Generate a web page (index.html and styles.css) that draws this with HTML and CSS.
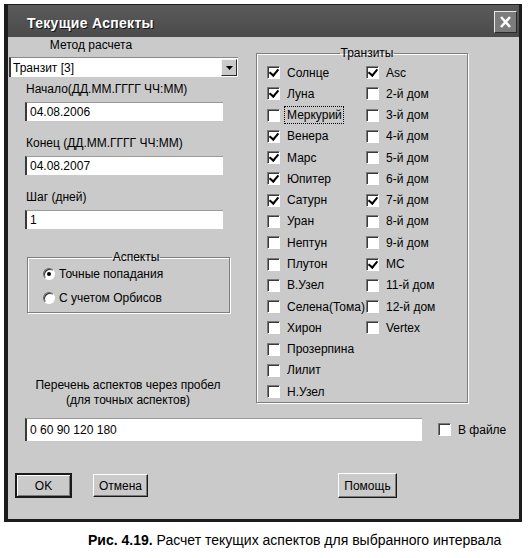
FILE: index.html
```html
<!DOCTYPE html>
<html lang="ru">
<head>
    <meta charset="UTF-8">
    <title>Текущие Аспекты</title>
    <link rel="stylesheet" href="styles.css">
</head>
<body>

<!-- Dialog window -->
<div class="dialog">
    <div class="titlebar">
        <span class="title">Текущие Аспекты</span>
        <button class="close-btn">
            <svg width="13" height="12" viewBox="0 0 13 12"><path d="M2 1 L11 11 M11 1 L2 11" stroke="#fff" stroke-width="2.6" fill="none"/></svg>
        </button>
    </div>

    <div class="dialog-body">
        <div class="main">
            <!-- Left side: method, dates, step, aspects -->
            <div class="left-col">
                <div class="method-label">Метод расчета</div>
                <div class="select">
                    <span class="select-text">Транзит [3]</span>
                    <span class="select-arrow"><svg width="7" height="4" viewBox="0 0 7 4"><path d="M0 0 H7 L3.5 4 Z" fill="#000"/></svg></span>
                </div>

                <div class="field-label">Начало(ДД.ММ.ГГГГ ЧЧ:ММ)</div>
                <input class="field" type="text" value="04.08.2006">

                <div class="field-label">Конец (ДД.ММ.ГГГГ ЧЧ:ММ)</div>
                <input class="field" type="text" value="04.08.2007">

                <div class="field-label">Шаг (дней)</div>
                <input class="field" type="text" value="1">

                <fieldset class="group aspects">
                    <legend>Аспекты</legend>
                    <label class="radio-row"><span class="radio checked"></span>Точные попадания</label>
                    <label class="radio-row"><span class="radio"></span>С учетом Орбисов</label>
                </fieldset>

                <div class="list-label">Перечень аспектов через пробел<br>(для точных аспектов)</div>
            </div>

            <!-- Right side: transit bodies and houses -->
            <fieldset class="group transits">
                <legend>Транзиты</legend>
                <div class="check-grid">
                    <label class="check-row"><span class="check on"></span>Солнце</label>
                    <label class="check-row"><span class="check on"></span>Луна</label>
                    <label class="check-row"><span class="check"></span><span class="focused">Меркурий</span></label>
                    <label class="check-row"><span class="check on"></span>Венера</label>
                    <label class="check-row"><span class="check on"></span>Марс</label>
                    <label class="check-row"><span class="check on"></span>Юпитер</label>
                    <label class="check-row"><span class="check on"></span>Сатурн</label>
                    <label class="check-row"><span class="check"></span>Уран</label>
                    <label class="check-row"><span class="check"></span>Нептун</label>
                    <label class="check-row"><span class="check"></span>Плутон</label>
                    <label class="check-row"><span class="check"></span>В.Узел</label>
                    <label class="check-row"><span class="check"></span>Селена(Тома)</label>
                    <label class="check-row"><span class="check"></span>Хирон</label>
                    <label class="check-row"><span class="check"></span>Прозерпина</label>
                    <label class="check-row"><span class="check"></span>Лилит</label>
                    <label class="check-row"><span class="check"></span>Н.Узел</label>

                    <label class="check-row"><span class="check on"></span>Asc</label>
                    <label class="check-row"><span class="check"></span>2-й дом</label>
                    <label class="check-row"><span class="check"></span>3-й дом</label>
                    <label class="check-row"><span class="check"></span>4-й дом</label>
                    <label class="check-row"><span class="check"></span>5-й дом</label>
                    <label class="check-row"><span class="check"></span>6-й дом</label>
                    <label class="check-row"><span class="check on"></span>7-й дом</label>
                    <label class="check-row"><span class="check"></span>8-й дом</label>
                    <label class="check-row"><span class="check"></span>9-й дом</label>
                    <label class="check-row"><span class="check on"></span>MC</label>
                    <label class="check-row"><span class="check"></span>11-й дом</label>
                    <label class="check-row"><span class="check"></span>12-й дом</label>
                    <label class="check-row"><span class="check"></span>Vertex</label>
                </div>
            </fieldset>
        </div>

        <div class="list-row">
            <input class="field wide" type="text" value="0 60 90 120 180">
            <label class="check-row"><span class="check"></span>В файле</label>
        </div>

        <div class="buttons">
            <button class="btn default">OK</button>
            <button class="btn cancel">Отмена</button>
            <button class="btn help">Помощь</button>
        </div>
    </div>
</div>

<p class="figure-caption"><b>Рис. 4.19.</b> Расчет текущих аспектов для выбранного интервала</p>

</body>
</html>
```

FILE: styles.css
```css
* {
    box-sizing: border-box;
}
body {
    margin: 0;
    background-color: #fff;
    font-family: "Liberation Sans", Arial, sans-serif;
}
.dialog {
    margin: 4px 0 0 4px;
    width: 518px;
    height: 518px;
    background-color: #cacaca;
    border: 3px solid #1c1c1c;
    border-left-width: 4px;
    border-top-width: 1px;
    font-size: 12px;
    color: #000;
}

/* Title bar */
.titlebar {
    height: 32px;
    background: linear-gradient(#5a5a5a, #4a4a4a);
    display: flex;
    align-items: flex-start;
    justify-content: space-between;
    padding: 0 2px 0 19px;
}
.title {
    margin-top: 10px;
    font-size: 14px;
    font-weight: bold;
    line-height: 16px;
    color: #fff;
    letter-spacing: 0.3px;
    text-shadow: 1px 1px 0 #111;
}
.close-btn {
    margin-top: 6px;
    width: 23px;
    height: 22px;
    padding: 0;
    background-color: #7c7c7c;
    border: 1px solid;
    border-color: #e8e8e8 #2a2a2a #2a2a2a #e8e8e8;
    display: flex;
    align-items: center;
    justify-content: center;
}

/* Main area */
.main {
    display: flex;
    height: 371px;
}
.left-col {
    width: 248px;
    display: flex;
    flex-direction: column;
    align-items: flex-start;
}
.method-label {
    width: 166px;
    margin-top: 1px;
    line-height: 14px;
    text-align: center;
}
.select {
    margin: 5px 0 0 1px;
    width: 229px;
    height: 20px;
    background-color: #fff;
    border-top: 1px solid #8a8a8a;
    border-left: 2px solid #3a3a3a;
    display: flex;
    align-items: center;
    justify-content: space-between;
    padding: 0 1px 0 2px;
}
.select-arrow {
    width: 16px;
    height: 17px;
    background-color: #cacaca;
    border: 1px solid;
    border-color: #f4f4f4 #2a2a2a #2a2a2a #f4f4f4;
    display: flex;
    align-items: center;
    justify-content: center;
}
.field-label {
    margin: 5px 0 0 18px;
    line-height: 14px;
}
.field {
    margin: 6px 0 0 17px;
    width: 198px;
    height: 19px;
    padding: 0 0 0 3px;
    font: inherit;
    color: #000;
    background-color: #fff;
    border: none;
    border-top: 1px solid #9a9a9a;
    border-left: 2px solid #3a3a3a;
    outline: none;
}
.field + .field-label {
    margin-top: 15px;
}

/* Group boxes */
.group {
    margin: 0;
    padding: 0;
    min-width: 0;
    border: 1px solid #7e7e7e;
    box-shadow: inset 1px 1px 0 #fff, 1px 1px 0 #fff;
}
.group legend {
    margin: 0 auto;
    padding: 0 1px;
    line-height: 14px;
}
.aspects {
    margin: 22px 0 0 19px;
    width: 203px;
    height: 62px;
    padding: 0 0 0 15px;
}
.aspects legend {
    line-height: 12px;
}
.radio-row {
    display: flex;
    align-items: center;
    height: 24px;
    gap: 4px;
}
.radio-row:first-of-type {
    margin-top: -1px;
}
.radio {
    position: relative;
    width: 12px;
    height: 12px;
    border-radius: 50%;
    background-color: #fff;
    border: 1px solid;
    border-color: #6a6a6a #fff #fff #6a6a6a;
    box-shadow: inset 1px 1px 0 #303030;
}
.radio.checked::after {
    content: "";
    position: absolute;
    left: 3px;
    top: 3px;
    width: 4px;
    height: 4px;
    border-radius: 50%;
    background-color: #000;
}
.list-label {
    width: 240px;
    margin-top: 65px;
    line-height: 15px;
    text-align: center;
}

.transits {
    margin-top: 9px;
    width: 212px;
    height: 357px;
    padding: 2px 0 0 10px;
    align-self: flex-start;
}
.check-grid {
    display: grid;
    grid-template-rows: repeat(16, 21.27px);
    grid-template-columns: 99px 1fr;
    grid-auto-flow: column;
}
.check-row {
    display: flex;
    align-items: center;
    gap: 7px;
    white-space: nowrap;
}
.check {
    position: relative;
    flex: none;
    width: 13px;
    height: 13px;
    background-color: #fff;
    border: 1px solid;
    border-color: #7a7a7a #fff #fff #7a7a7a;
    box-shadow: inset 1px 1px 0 #3a3a3a;
}
.check.on::after {
    content: "";
    position: absolute;
    left: 3px;
    top: 0;
    width: 4px;
    height: 7px;
    border: solid #000;
    border-width: 0 2px 2px 0;
    transform: rotate(40deg);
}
.focused {
    outline: 1px dotted #000;
    outline-offset: 1px;
    margin-left: -1px;
    padding-left: 1px;
}

/* Aspect list row */
.list-row {
    margin-top: 10px;
    display: flex;
    align-items: center;
}
.field.wide {
    margin: 0 0 0 17px;
    width: 397px;
    height: 23px;
}
.list-row .check-row {
    margin-left: 16px;
}

/* Buttons */
.buttons {
    margin-top: 32px;
    display: flex;
    align-items: center;
    padding-left: 7px;
}
.btn {
    height: 25px;
    padding: 0;
    font: inherit;
    color: #000;
    background-color: #cacaca;
    border: 1px solid;
    border-color: #fff #1a1a1a #1a1a1a #fff;
    box-shadow: inset -1px -1px 0 #7a7a7a;
}
.btn.default {
    width: 57px;
    outline: 1px solid #1a1a1a;
    outline-offset: -1px;
    border-width: 2px;
    border-color: #1a1a1a;
    box-shadow: inset 1px 1px 0 #fff, inset -1px -1px 0 #7a7a7a;
}
.btn.cancel {
    margin-left: 21px;
    width: 55px;
    height: 23px;
}
.btn.help {
    margin-left: 190px;
    width: 59px;
}

.figure-caption {
    margin: 10px 0 0 88px;
    font-family: Arial, "Liberation Sans", sans-serif;
    font-size: 14px;
    line-height: 16px;
    color: #000;
}
```
